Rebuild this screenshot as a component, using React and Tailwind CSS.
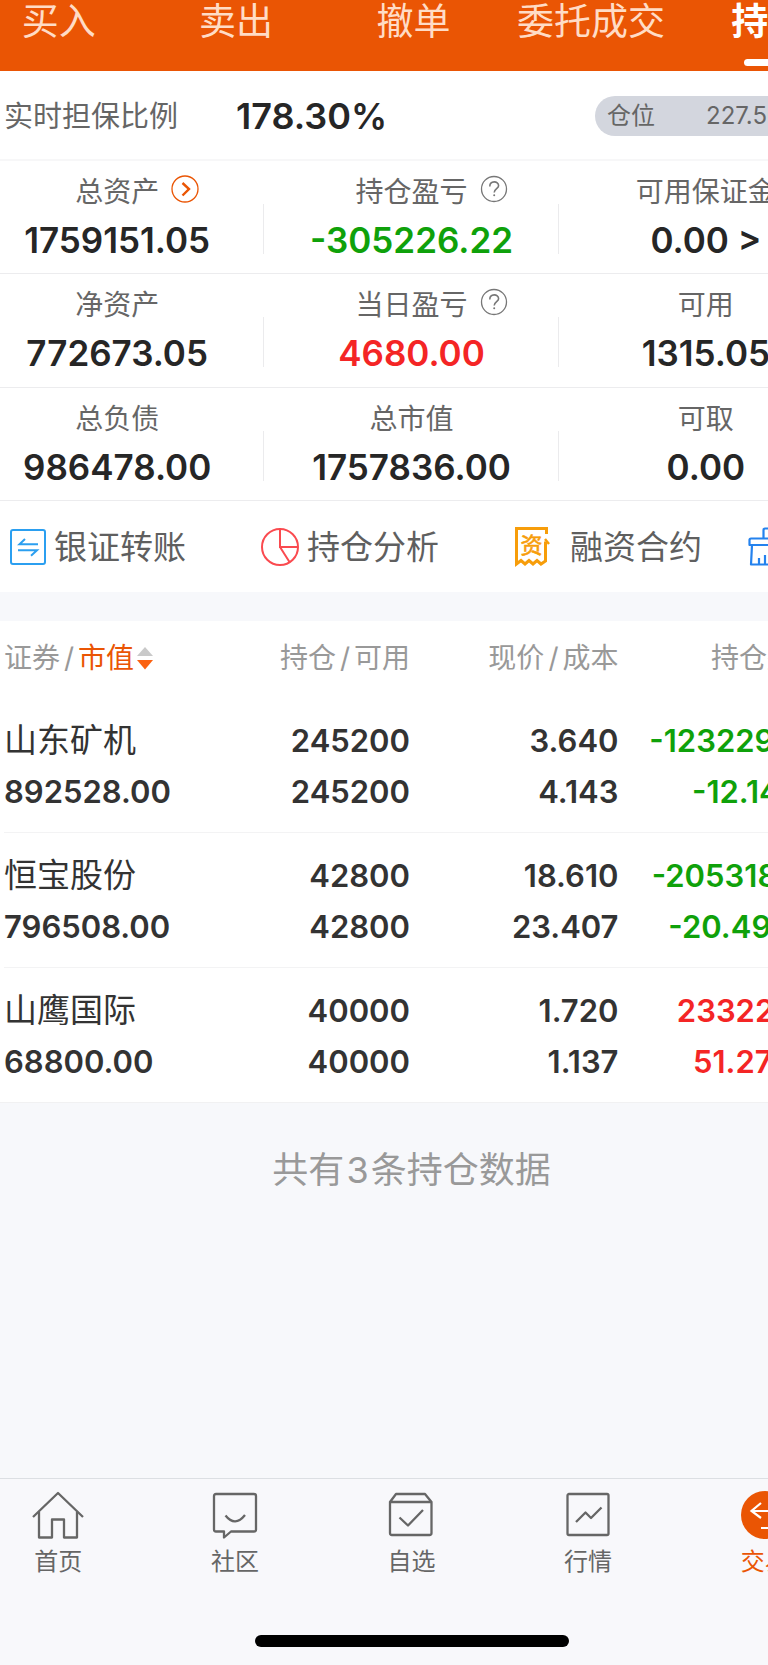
import React from 'react';
import clsx from 'clsx';

const tabs = ['买入', '卖出', '撤单', '委托成交', '持仓'];

const stats = [
  { label: '总资产', value: '1759151.05', icon: 'more' },
  { label: '持仓盈亏', value: '-305226.22', icon: 'help', tone: 'text-[#0fa10a]' },
  { label: '可用保证金', value: '0.00 >' },
  { label: '净资产', value: '772673.05' },
  { label: '当日盈亏', value: '4680.00', icon: 'help', tone: 'text-[#f42525]' },
  { label: '可用', value: '1315.05' },
  { label: '总负债', value: '986478.00' },
  { label: '总市值', value: '1757836.00' },
  { label: '可取', value: '0.00' }
];

const holdings = [
  { name: '山东矿机', value: '892528.00', amount: '245200', free: '245200', price: '3.640', cost: '4.143', profit: '-123229.34', rate: '-12.141%' },
  { name: '恒宝股份', value: '796508.00', amount: '42800', free: '42800', price: '18.610', cost: '23.407', profit: '-205318.76', rate: '-20.494%' },
  { name: '山鹰国际', value: '68800.00', amount: '40000', free: '40000', price: '1.720', cost: '1.137', profit: '23322.88', rate: '51.275%' }
];

function MoreIcon() {
  return (
    <svg viewBox="0 0 28 28" className="h-7 w-7" fill="none" stroke="#ea5504">
      <circle cx="14" cy="14" r="13" strokeWidth="1.3" />
      <path d="M11.5 8 L18 14 L11.5 20.5" strokeWidth="2.4" />
    </svg>
  );
}

function HelpIcon() {
  return (
    <svg viewBox="0 0 28 28" className="h-7 w-7" fill="none" stroke="#777" strokeWidth="1.3">
      <circle cx="14" cy="14" r="12.5" />
      <path d="M9.8 11.4 C9.8 5.4 18.6 5.6 18.6 10.8 C18.6 13.6 14.2 14 14.2 17.6" strokeWidth="1.6" />
      <circle cx="14.2" cy="20.2" r="1" fill="#777" stroke="none" />
    </svg>
  );
}

function TransferIcon() {
  return (
    <svg viewBox="0 0 36 36" className="h-9 w-9" fill="none" stroke="#2b9ff0" strokeWidth="2">
      <rect x="1" y="1" width="34" height="34" rx="2" />
      <path d="M28 15.3 H9.5 L15 10" />
      <path d="M8 21.3 H27 L21 26.8" />
    </svg>
  );
}

function PieIcon() {
  return (
    <svg viewBox="0 0 38 38" className="h-[38px] w-[38px]" fill="none" stroke="#fa4a4f" strokeWidth="2">
      <circle cx="19" cy="19" r="18" />
      <path d="M19 1 V19 H37 M19 19 L28.5 34" />
    </svg>
  );
}

function ContractIcon() {
  return (
    <svg viewBox="0 0 36 42" className="h-[42px] w-9" fill="none" stroke="#f79d0a">
      <path d="M32.5 8 V2.5 H2.5 V38 L7 34.5 L11 38 L15 34.5 L19 38 L23 34.5 L27 38 L31.5 35 V15.5" strokeWidth="3" />
      <path d="M31 13 L35 18" strokeWidth="2.4" />
      <text x="17.5" y="27" textAnchor="middle" fontSize="22" fill="#f79d0a" strokeWidth="0.6">资</text>
    </svg>
  );
}

function BroomIcon() {
  return (
    <svg viewBox="0 0 38 40" className="h-10 w-[38px]" fill="none" stroke="#2482ee" strokeWidth="2.2" strokeLinejoin="round">
      <path d="M15.5 11 V3 Q15.5 1.5 17 1.5 H21 Q22.5 1.5 22.5 3 V11" />
      <path d="M3 11.5 H35 Q36.5 11.5 36.5 13 V18 H1.5 V13 Q1.5 11.5 3 11.5 Z" />
      <path d="M4 18 L3 37.5 H34 L33.5 18 M11 37 V31 M17 37 V28 M24 37 V31" />
    </svg>
  );
}

const navIcons = {
  home: (
    <>
      <path d="M1 26 L26 2 L51 26" />
      <path d="M7 21 V46.5 H20 V28.5 H32 V46.5 H45 V21" />
    </>
  ),
  community: (
    <>
      <path d="M7 3 H45 Q47 3 47 5 V38.5 Q47 40.5 45 40.5 H22 L15 46.5 V40.5 H7 Q5 40.5 5 38.5 V5 Q5 3 7 3 Z" />
      <path d="M16.5 24.5 Q26 36.5 36 24" />
    </>
  ),
  watch: (
    <>
      <path d="M5 11 L11 3 H40 L46.5 11 V42 Q46.5 44 44.5 44 H7 Q5 44 5 42 Z M5 11 H46.5" />
      <path d="M14.5 26.5 L23 34.5 L38 19" />
    </>
  ),
  market: (
    <>
      <rect x="5.5" y="3" width="41" height="41" rx="1.5" />
      <path d="M14 31 L23.5 21.5 L29 27 L39.5 16.5" />
    </>
  )
};

const nav = [
  { label: '首页', icon: 'home' },
  { label: '社区', icon: 'community' },
  { label: '自选', icon: 'watch' },
  { label: '行情', icon: 'market' },
  { label: '交易', icon: 'trade', active: true }
];

function TradeIcon() {
  return (
    <svg viewBox="0 0 48 48" className="h-12 w-12" fill="none" stroke="#fff" strokeWidth="2.2">
      <circle cx="24" cy="24" r="24" fill="#ea5504" stroke="none" />
      <path d="M20 12 L10.5 20 L20 27 M10.5 20 H37" />
      <path d="M20 37 H38 L30 30" />
    </svg>
  );
}

const th = 'h-[77px] p-0 pb-1 text-right font-normal whitespace-nowrap';
const td = 'pt-[17px] pb-[15px] pl-0 leading-[51px]';

export default function App() {
  return (
    <div className="min-h-screen overflow-hidden bg-[#f7f8fb] font-['Inter','Noto_Sans_CJK_SC',sans-serif] text-[#262626]">
      {/* The screen runs past both sides of the window */}
      <div className="-ml-[30px] flex min-h-screen w-[calc(100%+115px)] flex-col">
        <nav className="-mr-1 grid h-[71px] grid-cols-5 bg-[#ea5504] text-[37px] leading-[44px] text-[#ffdcc6]">
          {tabs.map((t, i) => (
            <button key={t} className={clsx('flex flex-col items-center whitespace-nowrap', i === 4 && 'font-bold text-white')}>
              {t}
              {i === 4 && <span className="mt-[15px] h-[7px] w-12 rounded-full bg-white" />}
            </button>
          ))}
        </nav>

        <main className="flex-1">
          <section className="bg-white">
            <div className="flex h-[90px] items-center border-b-2 border-[#f7f7f8] pt-0.5 pr-[26px] pl-[34px]">
              <span className="w-[232px] pt-0.5 text-[29px] text-[#666]">实时担保比例</span>
              <strong className="flex-1 text-[36px] font-semibold">178.30%</strong>
              <span className="flex h-10 w-[232px] items-center gap-[51px] rounded-full bg-[#d3d6de] pl-3 text-2xl text-[#666]">
                <span>仓位</span>
                <span>227.50%</span>
              </span>
            </div>

            <dl className="grid h-[340px] grid-cols-3 grid-rows-3">
              {stats.map((s, i) => (
                <div
                  key={s.label}
                  className="relative flex flex-col items-center border-b border-[#ececee] pt-2 whitespace-nowrap"
                >
                  <dt className="relative text-[28px] leading-[46px] text-[#666]">
                    {s.label}
                    {s.icon && (
                      <button aria-label={s.label + '说明'} className="absolute top-1.5 left-full ml-3">
                        {s.icon === 'more' ? <MoreIcon /> : <HelpIcon />}
                      </button>
                    )}
                  </dt>
                  <dd className={clsx('text-[35px] leading-[51px] font-semibold', s.tone)}>{s.value}</dd>
                  {i % 3 < 2 && <span className="absolute top-[43px] right-0 h-[50px] w-px bg-[#ebebed]" />}
                </div>
              ))}
            </dl>

            <div className="grid h-[91px] grid-cols-[251px_253px_234px_1fr] items-center pl-10 text-[33px] whitespace-nowrap text-[#5f5f5f]">
              <button className="flex items-center gap-2"><TransferIcon /><span className="pt-0.5">银证转账</span></button>
              <button className="flex items-center gap-2"><PieIcon /><span className="pt-0.5">持仓分析</span></button>
              <button className="flex items-center gap-5"><ContractIcon /><span className="pt-0.5">融资合约</span></button>
              <button aria-label="一键清仓" className="flex items-center"><BroomIcon /></button>
            </div>
          </section>

          <section className="mt-[29px] border-b border-[#f1f1f2] bg-white pr-[26px] pl-[34px]">
            <table className="w-full table-fixed">
              <thead className="text-[28px] text-[#999]">
                <tr>
                  <th className={clsx(th, 'w-[24%]')}>
                    <button className="flex items-center">
                      证券<span className="mx-1">/</span>
                      <span className="text-[#ea5504]">市值</span>
                      <svg viewBox="0 0 18 24" className="ml-0.5 h-6 w-[18px]">
                        <path d="M1 10 L9 1 L17 10 Z" fill="#c9c9c9" />
                        <path d="M1 14 H17 L9 23.5 Z" fill="#fb6110" />
                      </svg>
                    </button>
                  </th>
                  <th className={th}>持仓<span className="mx-1">/</span>可用</th>
                  <th className={th}>现价<span className="mx-1">/</span>成本</th>
                  <th className={th}><span className="mr-1">持仓盈亏</span></th>
                </tr>
              </thead>
              <tbody className="text-right text-[31px] font-semibold text-[#333]">
                {holdings.map((h, i) => (
                  <tr key={h.name} className={clsx(i < 2 && 'border-b border-[#f3f3f4]')}>
                    <td className={clsx(td, 'text-left')}>
                      <div className="text-[33px] font-normal">{h.name}</div>
                      <div>{h.value}</div>
                    </td>
                    <td className={td}>
                      <div>{h.amount}</div>
                      <div>{h.free}</div>
                    </td>
                    <td className={td}>
                      <div>{h.price}</div>
                      <div>{h.cost}</div>
                    </td>
                    <td className={clsx(td, 'pr-1', h.profit.startsWith('-') ? 'text-[#0fa10a]' : 'text-[#f42525]')}>
                      <div>{h.profit}</div>
                      <div>{h.rate}</div>
                    </td>
                  </tr>
                ))}
              </tbody>
            </table>
          </section>

          <p className="pt-[42px] text-center text-[36px] leading-[50px] text-[#999]">
            共有<span className="mx-0.5">3</span>条持仓数据
          </p>
        </main>

        <footer className="border-t border-[#dcdfe3] bg-[#f8f8fb] pb-[18px]">
          <nav className="grid grid-cols-5 pt-3">
            {nav.map((n) => (
              <a
                key={n.label}
                href="#"
                className={clsx('flex flex-col items-center gap-1 text-2xl leading-[38px]', n.active ? 'text-[#ea5504]' : 'text-[#666]')}
              >
                {n.active ? (
                  <TradeIcon />
                ) : (
                  <svg viewBox="0 0 52 48" className="h-12 w-13" fill="none" stroke="#666" strokeWidth="2.3" strokeLinejoin="round">
                    {navIcons[n.icon]}
                  </svg>
                )}
                {n.label}
              </a>
            ))}
          </nav>
          <div className="mx-auto mt-[54px] h-3 w-[314px] rounded-full bg-black" />
        </footer>
      </div>
    </div>
  );
}
